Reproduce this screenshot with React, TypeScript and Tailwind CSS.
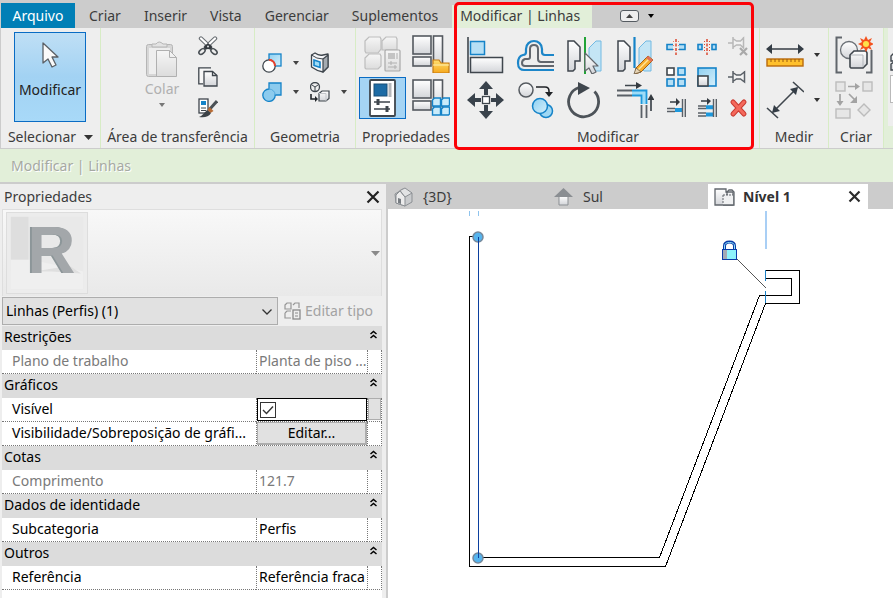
import { Fragment } from "react";
import type { ReactNode } from "react";
import clsx from "clsx";

const INK = "#3f464d";
const BLUE = "#1583c8";
const SKY = "#b5dff5";

function Svg({
  w,
  h,
  children,
  className,
}: {
  w: number;
  h: number;
  children: ReactNode;
  className?: string;
}) {
  return (
    <svg
      width={w}
      height={h}
      viewBox={`0 0 ${w} ${h}`}
      fill="none"
      aria-hidden="true"
      className={clsx("block shrink-0", className)}
    >
      {children}
    </svg>
  );
}

// Gradients shared by all the ribbon icons.
function SharedDefs() {
  return (
    <svg width="0" height="0" className="absolute" aria-hidden="true">
      <defs>
        <linearGradient id="metal" x1="0" y1="0" x2="0" y2="1">
          <stop offset="0" stopColor="#ffffff" />
          <stop offset="1" stopColor="#d3d5d9" />
        </linearGradient>
        <linearGradient id="pale" x1="0" y1="0" x2="0" y2="1">
          <stop offset="0" stopColor="#f6f6f6" />
          <stop offset="1" stopColor="#dcdcdc" />
        </linearGradient>
        <linearGradient id="sky" x1="0" y1="0" x2="1" y2="1">
          <stop offset="0" stopColor="#8ed0f1" />
          <stop offset="1" stopColor="#d5effb" />
        </linearGradient>
        <linearGradient id="gold" x1="0" y1="0" x2="0" y2="1">
          <stop offset="0" stopColor="#ffdf70" />
          <stop offset="1" stopColor="#f5a81c" />
        </linearGradient>
      </defs>
    </svg>
  );
}

function Caret({ className }: { className?: string }) {
  return (
    <Svg w={6} h={4} className={className}>
      <path d="M0 0h6L3 4z" fill="currentColor" />
    </Svg>
  );
}

function Pointer() {
  return (
    <Svg w={20} h={28}>
      <path
        d="M3 2v20l5-4 4 8 4-2-4-8h6z"
        fill="#fafafa"
        stroke="#5b6066"
        strokeWidth="1.300"
        strokeLinejoin="round"
      />
    </Svg>
  );
}

function Paste() {
  return (
    <Svg w={34} h={39}>
      <rect x="1.500" y="4.500" width="26" height="32" rx="2" fill="#d6d6d6" stroke="#b5b5b5" />
      <rect x="4" y="8" width="21" height="26" fill="#eeeeee" />
      <path d="M7 7V4h4q3-4 7 0h4v3z" fill="#e3e3e3" stroke="#b5b5b5" />
      <path d="M11.500 10.500h13l7 7v19h-20z" fill="url(#pale)" stroke="#b0b0b0" />
      <path d="M24.500 10.500v7h7" stroke="#b0b0b0" />
    </Svg>
  );
}

// Blades on top, pivot in the middle, handles splayed below.
function Cut() {
  return (
    <Svg w={20} h={20}>
      <path d="M3 2.500l9 8.500M17 2.500L8 11" stroke="#6c7176" strokeWidth="4.400" strokeLinecap="round" />
      <path d="M3 2.500l9 8.500M17 2.500L8 11" stroke="#fff" strokeWidth="2.200" strokeLinecap="round" />
      <path d="M6.500 10l3.500-3 3.500 3 1 4-4.500-1-4.500 1z" fill="#34393e" />
      <ellipse cx="4" cy="15.500" rx="3.500" ry="2.200" transform="rotate(-40 4 15.500)" fill="#eee" stroke="#4b5156" strokeWidth="1.600" />
      <ellipse cx="16" cy="15.500" rx="3.500" ry="2.200" transform="rotate(40 16 15.500)" fill="#eee" stroke="#4b5156" strokeWidth="1.600" />
      <circle cx="10" cy="10.500" r="1" fill="#dfe1e3" />
    </Svg>
  );
}

function CopyPages() {
  return (
    <Svg w={20} h={20}>
      <path d="M13 .8H.8v16H5" stroke={INK} strokeWidth="1.300" fill="#f7f7f7" />
      <path d="M6 4.500h8.500l4.500 4V19H6z" fill="url(#metal)" stroke={INK} strokeWidth="1.300" />
      <path d="M14.500 4.500v4H19" stroke={INK} strokeWidth="1.300" />
    </Svg>
  );
}

function MatchType() {
  return (
    <Svg w={20} h={20}>
      <rect x="1" y="1" width="9" height="14" fill="#fff" stroke={INK} strokeWidth="1.300" />
      <rect x="3" y="3" width="5" height="4" fill={BLUE} />
      <path d="M3 10h5M3 12.500h5" stroke={INK} />
      <path d="M19 3l-8 9" stroke="#4b5156" strokeWidth="3" />
      <path d="M11.500 9l4 4-3 2-3-3z" fill="#b86c35" />
      <path d="M9 12l4 3c-2 4-7 5-12 4 3-1 5-4 8-7z" fill="#3c4247" />
    </Svg>
  );
}

function Cope() {
  return (
    <Svg w={20} h={20}>
      <rect x="7" y="1" width="12" height="12" fill="url(#sky)" stroke={BLUE} strokeWidth="1.300" />
      <circle cx="7" cy="13" r="6.200" fill="#fff" stroke={INK} strokeWidth="1.300" />
      <path d="M7 6.800A6 6 0 0 1 13 13" stroke="#e8402c" strokeWidth="2" />
    </Svg>
  );
}

function Join() {
  return (
    <Svg w={20} h={20}>
      <path
        d="M7 1h12v12h-5.800A6.200 6.200 0 1 1 7 7z"
        fill="#8ccbee"
        stroke={BLUE}
        strokeWidth="1.300"
      />
      <path d="M7 7a6.200 6.200 0 0 1 6.200 6" stroke="#55a9dc" />
    </Svg>
  );
}

function WallOpening() {
  return (
    <Svg w={20} h={22}>
      <path d="M1.500 3L5 1q4 3 8 2l5-1v13l-5 5q-6-1-11.500-5z" fill="#f5f6f8" stroke={INK} strokeWidth="1.300" strokeLinejoin="round" />
      <path d="M13 7l5-4v12l-5 5z" fill="#a5abb1" stroke={INK} strokeWidth="1.200" strokeLinejoin="round" />
      <path d="M1.500 3q5 4 11.500 4" stroke={INK} />
      <path d="M4 8l6 2v5.500l-6-2z" fill="#9fdcf7" stroke={BLUE} strokeWidth="1.600" />
    </Svg>
  );
}

function Demolish() {
  return (
    <Svg w={20} h={20}>
      <circle cx="5" cy="5" r="4.500" stroke={INK} strokeWidth="1.300" />
      <path d="M5 5L2 3M5 5l3-2M5 5v4" stroke={INK} />
      <path d="M1 12v5h5" stroke="#22262a" strokeWidth="1.600" />
      <path d="M5 14l3 3-3 3z" fill="#22262a" />
      <path d="M9 11.500l3-2.500h7v7.500l-3 2.500H9z" fill="url(#metal)" stroke={INK} strokeWidth="1.200" />
      <path d="M9 11.500h7V19" stroke="#c4c7cb" />
    </Svg>
  );
}

function TypeProperties() {
  return (
    <Svg w={38} h={38}>
      <g fill="url(#pale)" stroke="#bdbdbd" strokeWidth="1.200">
        <path d="M1 6l4-4h11l1 2v10l-3 4H2l-1-2z" />
        <path d="M18 6l4-4h10l1 2v11H18z" />
        <path d="M1 23l4-4h11l1 2v10l-3 3H2l-1-1z" />
        <rect x="21" y="15" width="15" height="21" rx="1" stroke="#a9a9a9" />
      </g>
      <rect x="24" y="18" width="7" height="6" fill="#c4c4c4" />
      <path d="M33 18v6M24 28h9M24 32h9M27 26v4M31 30v4" stroke="#b0b0b0" />
    </Svg>
  );
}

function PanelFrame({ children }: { children: ReactNode }) {
  return (
    <Svg w={38} h={38}>
      <g fill="url(#metal)" stroke="#54595f" strokeWidth="1.600">
        <rect x="1" y="1" width="18" height="18" />
        <rect x="21.500" y="1" width="9" height="29" />
        <rect x="1" y="22" width="18" height="9" />
      </g>
      {children}
    </Svg>
  );
}

function FamilyFolder() {
  return (
    <PanelFrame>
      <path d="M21 25h6l2 3h8v10H21z" fill="url(#gold)" stroke="#c77a10" strokeWidth="1.200" />
      <path d="M21 30h16" stroke="#fff0b0" />
    </PanelFrame>
  );
}

function FamilyTypes() {
  return (
    <PanelFrame>
      <g fill="#c9ebfa" stroke={BLUE} strokeWidth="1.400">
        <path d="M20.500 21l2-2h6v8h-8zM29.500 21l2-2h6v7l-1 1h-7z" />
        <path d="M20.500 30l2-2h6v8h-8zM29.500 30l2-2h6v7l-1 1h-7z" />
      </g>
    </PanelFrame>
  );
}

function PropertiesSheet() {
  return (
    <Svg w={28} h={38}>
      <rect x="1" y="1" width="25" height="36" rx="1" fill="#fff" stroke={INK} strokeWidth="1.800" />
      <rect x="5" y="5" width="13" height="12" fill="#1c6ba5" stroke="#184e77" />
      <path d="M21 4v14" stroke="#b4b7bb" strokeWidth="3" />
      <path d="M5 23h16M5 30h16" stroke={INK} strokeWidth="1.400" />
      <path d="M9 20v6M18 27v6" stroke={INK} strokeWidth="3" />
    </Svg>
  );
}

function Align() {
  return (
    <Svg w={38} h={38}>
      <path d="M2 1v36" stroke={INK} strokeWidth="1.600" />
      <rect x="4.500" y="5.500" width="14" height="13" fill={SKY} stroke={BLUE} strokeWidth="1.500" />
      <rect x="4.500" y="21.500" width="32" height="15" fill="url(#metal)" stroke={INK} strokeWidth="1.500" />
    </Svg>
  );
}

function Offset() {
  return (
    <Svg w={38} h={38}>
      <path
        d="M38 19h-9q-3 0-3-3v-3c0-5-4-8-8-8s-8 3-8 8v3q0 3-3 3c-4 1-5 4-5 8 0 5 3 7 6 7h30"
        stroke="#1c86c9"
        strokeWidth="2.200"
      />
      <path
        d="M38 26H25q-3 0-3-3V13q0-4-4-4t-4 4v8q0 2-2 2H9q-3 1-3 4t3 3h29"
        stroke="#62676e"
        strokeWidth="2"
      />
    </Svg>
  );
}

function MirrorHalf() {
  return <path d="M2 5h6l6 6v14H9v8l-2 2H2z" fill="url(#metal)" stroke={INK} strokeWidth="1.500" />;
}

function MirrorPick() {
  return (
    <Svg w={38} h={38}>
      <MirrorHalf />
      <path d="M35 5h-5l-7 7v14l5 9h7z" fill="#c4e5f5" stroke="#72b9e2" />
      <path d="M19 1v37" stroke="#20a336" strokeWidth="2" />
      <path
        d="M19 17v18l4-3 3 6 4-2-3-6h5z"
        fill="url(#metal)"
        stroke="#63676c"
        strokeWidth="1.200"
        strokeLinejoin="round"
      />
    </Svg>
  );
}

function MirrorDraw() {
  return (
    <Svg w={38} h={38}>
      <MirrorHalf />
      <path d="M35 5h-5l-7 7v18l5 5h7z" fill="#c4e5f5" stroke="#72b9e2" />
      <path d="M18.500 1v31" stroke={BLUE} strokeWidth="2.200" />
      <path d="M20 32L32 20l5 4-12 12-6 2z" fill="#f6ad2d" stroke="#a25f18" />
      <path d="M22 34l12-12" stroke="#ffe59a" strokeWidth="1.500" />
      <path d="M30 22l2-2 5 4-2 2z" fill="#e0705a" />
      <path d="M20 32l5 4-7 2z" fill="#e8d5b5" stroke="#6a5a45" strokeWidth=".8" />
    </Svg>
  );
}

function Move() {
  return (
    <Svg w={38} h={38}>
      <g fill="#39424b">
        <path d="M20 0l7 8h-5v6h-4V8h-5z" />
        <path d="M20 38l7-8h-5v-6h-4v6h-5z" />
        <path d="M1 19l8-7v5h6v4H9v5z" />
        <path d="M38 19l-8-7v5h-5v4h5v5z" />
      </g>
      <rect x="16.500" y="15.500" width="7" height="7" fill="#fff" stroke={INK} strokeWidth="1.300" />
    </Svg>
  );
}

function CopyObjects() {
  return (
    <Svg w={38} h={38}>
      <circle cx="10" cy="9" r="7" fill="url(#metal)" stroke="#565b61" strokeWidth="1.500" />
      <path d="M20 6h9q4 0 4 4v3" stroke="#202327" strokeWidth="1.600" />
      <path d="M29 11l4 5 4-5z" fill="#202327" />
      <circle cx="30" cy="30" r="6.500" fill="#9fd8f4" stroke={BLUE} strokeWidth="1.500" />
      <circle cx="24" cy="25" r="7.500" fill="url(#sky)" stroke={BLUE} strokeWidth="1.500" />
    </Svg>
  );
}

function Rotate() {
  return (
    <Svg w={38} h={38}>
      <path d="M28.500 10.500a15 15 0 1 1-15.500-4" stroke="#4d5359" strokeWidth="2.800" />
      <path d="M12 1l12 6-12 7z" fill="#3f464d" />
    </Svg>
  );
}

function TrimCorner() {
  return (
    <Svg w={38} h={38}>
      <path d="M9 4.500h12M35 30V18" stroke={INK} strokeWidth="1.700" />
      <path d="M20 1l6 3.500L20 8zM31.500 19l3.500-6 3.500 6z" fill="#343a40" />
      <path d="M1 9.500h15M1 14.500h15M25.500 24v13M30.500 24v13" stroke="#5a6067" strokeWidth="1.800" />
      <path d="M16 12h12v11" stroke="#9fdcf7" strokeWidth="4" />
      <path d="M16 9.500h14.500V23M16 14.500h9.500V23" stroke="#1d98dc" strokeWidth="1.800" />
    </Svg>
  );
}

function Split() {
  return (
    <Svg w={20} h={20}>
      <path d="M7 8.500H1v5h6M13 8.500h6v5h-6" fill={SKY} stroke={BLUE} strokeWidth="1.600" />
      <path d="M10 3v16" stroke="#dc4a32" strokeWidth="1.500" strokeDasharray="3 1.500" />
      <path d="M7.500 5v12M12.500 5v12" stroke="#e8806c" strokeDasharray="1 3" />
    </Svg>
  );
}

function SplitGap() {
  return (
    <Svg w={20} h={20}>
      <rect x="1" y="8.500" width="4" height="5" fill={SKY} stroke={BLUE} strokeWidth="1.600" />
      <rect x="15" y="8.500" width="4" height="5" fill={SKY} stroke={BLUE} strokeWidth="1.600" />
      <path d="M10 3v16" stroke="#dc4a32" strokeWidth="1.500" strokeDasharray="3 1.500" />
      <path d="M7.500 5v12M12.500 5v12" stroke="#dc4a32" strokeDasharray="1 2" />
    </Svg>
  );
}

function PinShape({ color }: { color: string }) {
  return (
    <path
      d="M0 10h5M5 4v12M5.500 6l3 2h4l4-3v10l-4-3h-4l-3 2M16.500 4v12"
      fill="#f2f2f2"
      stroke={color}
      strokeWidth="1.500"
    />
  );
}

function Unpin() {
  return (
    <Svg w={20} h={20}>
      <path
        d="M0 7h5M5 1v12M5.500 3l3 2h4l3-3v10l-3-3h-4l-3 2M15.500 1v12"
        fill="#f2f2f2"
        stroke="#b8b8b8"
        strokeWidth="1.500"
      />
      <path d="M12 12l7 7M19 12l-7 7" stroke="#a9a9a9" strokeWidth="2.200" />
    </Svg>
  );
}

function Pin() {
  return (
    <Svg w={20} h={20}>
      <PinShape color="#5a6067" />
    </Svg>
  );
}

function ArrayIcon() {
  return (
    <Svg w={20} h={20}>
      <rect x="1" y="1" width="7" height="7" fill="#fff" stroke={INK} strokeWidth="1.600" />
      <g fill={SKY} stroke={BLUE} strokeWidth="1.600">
        <rect x="12" y="1" width="7" height="7" />
        <rect x="1" y="12" width="7" height="7" />
        <rect x="12" y="12" width="7" height="7" />
      </g>
    </Svg>
  );
}

function Scale() {
  return (
    <Svg w={20} h={20}>
      <rect x="1" y="1" width="18" height="18" fill="url(#sky)" stroke={BLUE} strokeWidth="1.600" />
      <rect x="1" y="9" width="10" height="10" fill="url(#metal)" stroke={INK} strokeWidth="1.600" />
    </Svg>
  );
}

function TrimOne() {
  return (
    <Svg w={20} h={20}>
      <path d="M4 4h7" stroke={INK} strokeWidth="1.600" />
      <path d="M10 0l4 4-4 4z" fill="#343a40" />
      <path d="M1 10.500h8M1 13.500h8" stroke="#5a6067" strokeWidth="1.400" />
      <path d="M9 12h7" stroke="#1d98dc" strokeWidth="4" />
      <path d="M16.500 1v18M19.300 1v18" stroke="#5a6067" strokeWidth="1.400" />
    </Svg>
  );
}

function TrimMany() {
  return (
    <Svg w={20} h={20}>
      <path d="M4 3h7" stroke={INK} strokeWidth="1.600" />
      <path d="M10 0l4 3-4 4z" fill="#343a40" />
      <path d="M1 8h8M1 10.500h8M1 15h8M1 18h8" stroke="#5a6067" strokeWidth="1.400" />
      <path d="M9 9.200h7M9 16.500h7" stroke="#1d98dc" strokeWidth="4" />
      <path d="M16.500 1v18M19.300 1v18" stroke="#5a6067" strokeWidth="1.400" />
    </Svg>
  );
}

function Delete() {
  return (
    <Svg w={20} h={20}>
      <path d="M5 4l11 12M16 4L5 16" stroke="#c93a30" strokeWidth="5" strokeLinecap="round" />
      <path d="M5 4l11 12M16 4L5 16" stroke="#f4695c" strokeWidth="3" strokeLinecap="round" />
    </Svg>
  );
}

function Ruler() {
  return (
    <Svg w={38} h={38}>
      <path d="M4 13h30" stroke={INK} strokeWidth="1.600" />
      <path d="M0 13l6-5v10zM38 13l-6-5v10z" fill="#343d46" />
      <rect x="1" y="23" width="36" height="7" fill="#ffc02c" stroke="#b96a0c" strokeWidth="1.400" />
      <path d="M5 23v3M9 23v3M13 23v3M17 23v3M21 23v3M25 23v3M29 23v3M33 23v3" stroke="#9a5a0e" />
    </Svg>
  );
}

function AlignedDimension() {
  return (
    <Svg w={38} h={38}>
      <path d="M7 31L31 7" stroke={INK} strokeWidth="1.600" />
      <path d="M1 27l11 10M27 1l11 10" stroke={INK} strokeWidth="1.600" />
      <path d="M6 32l2-8 6 6zM32 6l-8 2 6 6z" fill="#343d46" />
    </Svg>
  );
}

function CreateGroup() {
  return (
    <Svg w={38} h={38}>
      <path d="M7 1.500H1.500v35H7M31 36.500h5.500V14" stroke="#61666c" strokeWidth="2" />
      <circle cx="14" cy="14" r="8.500" fill="url(#metal)" stroke="#6b7076" strokeWidth="1.300" />
      <path d="M15 19l4-4h12l1 2v11l-4 4H16l-1-1z" fill="url(#metal)" stroke={INK} strokeWidth="1.600" />
      <path d="M16 19h12v12" stroke="#b3b7bc" />
      <path
        d="M31 0l2 4 4-2-2 4 4 2-4 2 2 4-4-2-2 4-2-4-4 2 2-4-4-2 4-2-2-4 4 2z"
        fill="#f4521e"
      />
      <circle cx="31" cy="8" r="3" fill="#ffe04a" />
    </Svg>
  );
}

function CreateSimilar() {
  return (
    <Svg w={38} h={38}>
      <g fill="#e6e6e6" stroke="#bcbcbc" strokeWidth="1.400">
        <rect x="1" y="1" width="9" height="9" />
        <rect x="28" y="1" width="9" height="9" />
        <rect x="1" y="28" width="14" height="9" />
        <path d="M29 23l6 6-6 6-6-6z" />
      </g>
      <path d="M13 5.500h8M5 13v8M14 13l6 6" stroke="#a3a3a3" strokeWidth="1.700" />
      <path d="M20 2l5 3.500L20 9zM1.500 20h7L5 25zM22 15v7h-7z" fill="#a3a3a3" />
    </Svg>
  );
}

function ToolButton({
  label,
  children,
  className,
}: {
  label: string;
  children: ReactNode;
  className?: string;
}) {
  return (
    <button
      type="button"
      aria-label={label}
      className={clsx("flex shrink-0 items-center justify-center", className)}
    >
      {children}
    </button>
  );
}

function RibbonPanel({
  title,
  children,
  className,
  caret,
}: {
  title: string;
  children: ReactNode;
  className: string;
  caret?: boolean;
}) {
  return (
    <section
      className={clsx(
        "relative flex shrink-0 flex-col border-r border-[#d7ecc5] bg-[#eeeeee]",
        className
      )}
    >
      <div className="flex h-[98px] items-center">{children}</div>
      <h2 className="flex h-[22px] items-center justify-center gap-2 whitespace-nowrap">
        {title}
        {caret && (
          <Svg w={9} h={5}>
            <path d="M0 0h9L4.500 5z" fill="#333" />
          </Svg>
        )}
      </h2>
    </section>
  );
}

const TABS = ["Criar", "Inserir", "Vista", "Gerenciar", "Suplementos"];

function TabBar() {
  return (
    <nav className="flex h-7 items-end bg-[#cccccc] pl-px">
      <button type="button" className="h-[25px] w-[74px] bg-[#007fb6] text-white">
        Arquivo
      </button>
      <div className="flex h-[25px] items-center gap-[23px] pr-3.5 pl-3.5">
        {TABS.map((tab) => (
          <button type="button" key={tab}>
            {tab}
          </button>
        ))}
      </div>
      <button
        type="button"
        className="h-[23px] w-[140px] bg-[#e2efd9] pr-1 pb-0.5 whitespace-nowrap"
      >
        Modificar | Linhas
      </button>
      <div className="flex h-[25px] items-center gap-1.5 pl-7 text-black">
        <button
          type="button"
          aria-label="Minimizar"
          className="flex h-3 w-[19px] items-center justify-center rounded-[3px] border border-[#555b61] bg-[#eeeeee]"
        >
          <Svg w={7} h={4}>
            <path d="M0 4h7L3.500 0z" fill="#444" />
          </Svg>
        </button>
        <ToolButton label="Opções da faixa" className="size-3">
          <Caret />
        </ToolButton>
      </div>
    </nav>
  );
}

function Ribbon() {
  return (
    <div className="flex h-[120px] overflow-x-clip bg-[#e2efd9]">
      <RibbonPanel title="Selecionar" caret className="w-[101px] border-l border-l-[#cccccc]">
        <button
          type="button"
          className="ml-[13px] flex h-[90px] w-[72px] flex-col items-center justify-start gap-[11px] border border-[#0a6cc4] bg-linear-to-b from-[#bfdff5] via-[#a2d2f3] to-[#a8d9f8] pt-2 text-[#222]"
        >
          <Pointer />
          Modificar
        </button>
      </RibbonPanel>

      <RibbonPanel title="Área de transferência" className="w-[154px]">
        <button
          type="button"
          className="ml-[41px] flex w-10 flex-col items-center text-[#b0b0b0]"
        >
          <Paste />
          <span className="leading-5">Colar</span>
          <Caret className="mt-1 mb-2 text-[#777]" />
        </button>
        <div className="ml-4 flex flex-col gap-[11px]">
          <ToolButton label="Cortar"><Cut /></ToolButton>
          <ToolButton label="Copiar"><CopyPages /></ToolButton>
          <ToolButton label="Corresponder tipo"><MatchType /></ToolButton>
        </div>
      </RibbonPanel>

      <RibbonPanel title="Geometria" className="w-[101px]">
        <div className="ml-[7px] grid grid-cols-[20px_6px_20px_6px] items-center gap-x-[11px] gap-y-2 text-[#444]">
          <ToolButton label="Recorte"><Cope /></ToolButton>
          <Caret />
          <ToolButton label="Abertura"><WallOpening /></ToolButton>
          <span />
          <ToolButton label="Unir"><Join /></ToolButton>
          <Caret />
          <ToolButton label="Demolir"><Demolish /></ToolButton>
          <Caret />
        </div>
      </RibbonPanel>

      <RibbonPanel title="Propriedades" className="w-[101px]">
        <div className="ml-[3px] grid grid-cols-[47px_38px] items-center justify-items-center gap-x-1.5 gap-y-1">
          <ToolButton label="Propriedades de tipo"><TypeProperties /></ToolButton>
          <ToolButton label="Categoria de família"><FamilyFolder /></ToolButton>
          <ToolButton
            label="Propriedades"
            className="h-[42px] w-[47px] border border-[#0a6cc4] bg-[#a5d4f4]"
          >
            <PropertiesSheet />
          </ToolButton>
          <ToolButton label="Tipos de família"><FamilyTypes /></ToolButton>
        </div>
      </RibbonPanel>

      <RibbonPanel title="Modificar" className="w-[303px]">
        <div className="flex items-center gap-3 pl-[9px]">
          <div className="grid grid-cols-4 gap-x-3 gap-y-[7px]">
            <ToolButton label="Alinhar"><Align /></ToolButton>
            <ToolButton label="Deslocamento"><Offset /></ToolButton>
            <ToolButton label="Espelhar por eixo"><MirrorPick /></ToolButton>
            <ToolButton label="Espelhar desenhando"><MirrorDraw /></ToolButton>
            <ToolButton label="Mover"><Move /></ToolButton>
            <ToolButton label="Copiar elementos"><CopyObjects /></ToolButton>
            <ToolButton label="Rotacionar"><Rotate /></ToolButton>
            <ToolButton label="Aparar canto"><TrimCorner /></ToolButton>
          </div>
          <div className="grid grid-cols-3 gap-[11px]">
            <ToolButton label="Dividir"><Split /></ToolButton>
            <ToolButton label="Dividir com folga"><SplitGap /></ToolButton>
            <ToolButton label="Desafixar"><Unpin /></ToolButton>
            <ToolButton label="Matriz"><ArrayIcon /></ToolButton>
            <ToolButton label="Escala"><Scale /></ToolButton>
            <ToolButton label="Fixar"><Pin /></ToolButton>
            <ToolButton label="Aparar um"><TrimOne /></ToolButton>
            <ToolButton label="Aparar vários"><TrimMany /></ToolButton>
            <ToolButton label="Excluir"><Delete /></ToolButton>
          </div>
        </div>
        {/* highlight frame around the contextual tab and its panel */}
        <div className="pointer-events-none absolute -top-[26px] -bottom-0.5 -left-[3px] w-[300px] rounded-[5px] border-3 border-[#fb0207]" />
      </RibbonPanel>

      <RibbonPanel title="Medir" className="w-[69px]">
        <div className="ml-1.5 grid grid-cols-[38px_6px] items-center gap-x-2.5 gap-y-[7px] text-[#333]">
          <ToolButton label="Medir distância"><Ruler /></ToolButton>
          <Caret />
          <ToolButton label="Cota alinhada"><AlignedDimension /></ToolButton>
          <Caret />
        </div>
      </RibbonPanel>

      <RibbonPanel title="Criar" className="w-[55px]">
        <div className="ml-1.5 flex flex-col gap-[7px]">
          <ToolButton label="Criar grupo"><CreateGroup /></ToolButton>
          <ToolButton label="Criar similar"><CreateSimilar /></ToolButton>
        </div>
      </RibbonPanel>

      <section className="ml-1 min-w-0 flex-1 overflow-hidden">
        <div className="flex h-[98px] flex-col justify-center gap-1 bg-[#eeeeee] pl-0.5">
          <Svg w={20} h={20}>
            <path d="M1 5l3-3h7v8H1zM1 13l3-2h7v8H1z" fill="url(#metal)" stroke={INK} strokeWidth="1.400" />
          </Svg>
          <span className="h-7 w-40 border border-[#b9b9b9] bg-white" />
        </div>
      </section>
    </div>
  );
}

type Row = { name: string; value: string; kind?: "check" | "button"; muted?: boolean };

const GROUPS: { title: string; rows: Row[] }[] = [
  {
    title: "Restrições",
    rows: [{ name: "Plano de trabalho", value: "Planta de piso ...", muted: true }],
  },
  {
    title: "Gráficos",
    rows: [
      { name: "Visível", value: "", kind: "check" },
      { name: "Visibilidade/Sobreposição de gráfi...", value: "Editar...", kind: "button" },
    ],
  },
  { title: "Cotas", rows: [{ name: "Comprimento", value: "121.7", muted: true }] },
  { title: "Dados de identidade", rows: [{ name: "Subcategoria", value: "Perfis" }] },
  { title: "Outros", rows: [{ name: "Referência", value: "Referência fraca" }] },
];

function ValueCell({ row }: { row: Row }) {
  if (row.kind === "check") {
    return (
      <div className="flex h-[23px] items-center border border-black pl-0.5">
        <span className="relative flex size-4">
          <input
            type="checkbox"
            defaultChecked
            aria-label={row.name}
            className="peer size-4 appearance-none border border-[#333] bg-white"
          />
          <Svg w={16} h={16} className="pointer-events-none absolute inset-0 hidden peer-checked:block">
            <path d="M3 8l3.500 3.500L13 4.500" stroke="#333" strokeWidth="1.400" />
          </Svg>
        </span>
      </div>
    );
  }
  if (row.kind === "button") {
    return (
      <button
        type="button"
        className="block h-[23px] w-full border border-r-2 border-b-2 border-[#adadad] bg-[#e1e1e1] leading-5"
      >
        {row.value}
      </button>
    );
  }
  return <span className="block pl-0.5">{row.value}</span>;
}

function PropertyTable() {
  return (
    <table className="w-full table-fixed border-separate border-spacing-0 bg-white text-black">
      <colgroup>
        <col />
        <col className="w-[111px]" />
        <col className="w-[15px]" />
      </colgroup>
      <tbody>
        {GROUPS.map((group) => (
          <Fragment key={group.title}>
            <tr className="h-6 bg-[#dcdcdc]">
              <th colSpan={2} className="p-0 pl-0.5 text-left align-top leading-[22px] font-normal">
                {group.title}
              </th>
              <td className="p-0 align-top">
                <ToolButton label={`Recolher ${group.title}`} className="w-3 pt-1">
                  <Svg w={7} h={9}>
                    <path d="M.5 4l3-2.500 3 2.500M.5 8l3-2.500 3 2.500" stroke="#000" strokeWidth="1.500" />
                  </Svg>
                </ToolButton>
              </td>
            </tr>
            {group.rows.map((row) => (
              <tr
                key={row.name}
                className={clsx(
                  "h-6 *:border-b *:border-dotted *:border-[#777] *:p-0 *:align-top *:leading-[21px]",
                  row.muted && "text-[#7a7a7a]"
                )}
              >
                <th className="overflow-hidden text-left font-normal whitespace-nowrap">
                  <span className="pl-2.5">{row.name}</span>
                </th>
                <td className="overflow-hidden border-l whitespace-nowrap">
                  <ValueCell row={row} />
                </td>
                <td className="border-x">
                  {row.kind === "check" && (
                    <button
                      type="button"
                      aria-label="Associar parâmetro"
                      className="block h-[22px] w-full border border-[#adadad] bg-[#e1e1e1]"
                    />
                  )}
                </td>
              </tr>
            ))}
          </Fragment>
        ))}
      </tbody>
    </table>
  );
}

function PropertiesPanel() {
  return (
    <aside className="flex w-[388px] shrink-0 flex-col border-r-2 border-[#cccccc] bg-[#eeeeee] pr-1 pl-0.5">
      <header className="flex h-[25px] items-center justify-between pl-0.5">
        <h2>Propriedades</h2>
        <ToolButton label="Fechar propriedades" className="size-[18px]">
          <Svg w={14} h={14}>
            <path d="M1.500 1.500l11 11M12.500 1.500l-11 11" stroke="#222" strokeWidth="2.200" />
          </Svg>
        </ToolButton>
      </header>

      <div className="flex h-[87px] items-center justify-between border border-b-0 border-[#dedede] bg-linear-to-b from-[#f8f8f8] to-[#e9e9e9] pl-[3px]">
        <svg
          viewBox="0 0 82 82"
          className="size-[82px] border border-[#dddddd] bg-[#ececec]"
          role="img"
          aria-label="Revit"
        >
          <rect x="4" y="4" width="74" height="74" fill="#e9e9e9" />
          <path d="M4 4h18v44H4z" fill="#dedede" />
          <path d="M4 48h22l52 12v18H4z" fill="#efefef" />
          <path d="M28 60l36-6 12 8-30-2z" fill="#dfdfdf" />
          <text
            x="21"
            y="62"
            fontSize="68"
            fontWeight="700"
            fill="#a3a7aa"
            className="font-['Liberation_Sans',sans-serif] [text-shadow:-1px_0_#8c9699,-2px_0_#8c9699]"
          >
            R
          </text>
        </svg>
        <ToolButton label="Seletor de tipo" className="h-full w-3 text-[#8a8a8a]">
          <Svg w={9} h={5}>
            <path d="M0 0h9L4.500 5z" fill="currentColor" />
          </Svg>
        </ToolButton>
      </div>

      <div className="flex h-[30px] items-center gap-1.5 pb-px">
        <div className="relative w-[276px]">
          <select
            aria-label="Filtro de propriedades"
            className="block h-7 w-full appearance-none border border-[#adadad] bg-[#e1e1e1] pl-[3px] text-black"
          >
            <option>Linhas (Perfis) (1)</option>
          </select>
          <Svg w={10} h={6} className="pointer-events-none absolute top-3 right-1.5">
            <path d="M.5.5L5 5 9.500.5" stroke="#333" strokeWidth="1.300" />
          </Svg>
        </div>
        <button type="button" className="flex items-center gap-1 whitespace-nowrap text-[#a3a3a3]">
          <Svg w={17} h={18}>
            <path
              d="M1 3l2-2h4v6H1zM9 3l2-2h4v5M1 11l2-2h4M1 11v5h6"
              stroke="#969696"
              strokeWidth="1.200"
            />
            <rect x="9" y="8" width="7" height="9" fill="#eee" stroke="#8a8a8a" strokeWidth="1.300" />
            <path d="M11 11h3M11 14h3" stroke="#8a8a8a" />
          </Svg>
          Editar tipo
        </button>
      </div>

      <div className="flex-1 bg-white">
        <PropertyTable />
      </div>
    </aside>
  );
}

function ViewTabs() {
  return (
    <div className="flex h-[25px] bg-[#cccccc]">
      <button type="button" className="flex w-40 items-center gap-2.5 pl-1.5">
        <Svg w={19} h={20}>
          <path d="M1 7l8-5 9 4v9l-7 4-9-3z" fill="#c9cbcd" stroke="#8b8f93" strokeLinejoin="round" />
          <path d="M2 8l4-4 5 6v9l-9-3z" fill="#ececec" stroke="#8b8f93" strokeLinejoin="round" />
          <path d="M6 3.500L11 1l7 5-7 4z" fill="#e2e3e4" stroke="#8b8f93" strokeLinejoin="round" />
          <path d="M4 11l3 1v5l-3-1z" fill="#777c81" />
        </Svg>
        {"{3D}"}
      </button>
      <button type="button" className="flex w-40 items-center gap-2.5 pl-1.5">
        <Svg w={19} h={18}>
          <path d="M5 8h9v9H5z" fill="url(#metal)" stroke="#8b8f93" />
          <path d="M9.500 0L19 9H0z" fill="#8a8e92" />
        </Svg>
        Sul
      </button>
      <div className="flex w-40 items-center justify-between bg-white pr-1.5 pl-1.5 font-bold text-[#333]">
        <button type="button" className="flex items-center gap-2">
          <Svg w={21} h={18}>
            <path d="M1 1h11v3h7v13H1z" fill="url(#metal)" stroke="#62676d" strokeWidth="1.300" />
            <path d="M9 7h10v10H9z" fill="#f0f1f2" />
            <path d="M13 7V4l2-2h3l2 2v13H9" stroke="#62676d" strokeWidth="1.300" />
            <path d="M9 7h10M9 7v9M13 3v4" stroke="#62676d" strokeDasharray="2 1" />
          </Svg>
          Nível 1
        </button>
        <ToolButton label="Fechar vista" className="size-4">
          <Svg w={13} h={13}>
            <path d="M1.500 1.500l10 10M11.500 1.500l-10 10" stroke="#2b2b2b" strokeWidth="2.200" />
          </Svg>
        </ToolButton>
      </div>
    </div>
  );
}

function Drawing() {
  return (
    <svg width="505" height="380" viewBox="0 0 505 380" fill="none" className="block" aria-hidden="true">
      <g shapeRendering="crispEdges">
        <path d="M81.500 2v5M90.500 2v5" stroke="#8fc4ee" />
        <path d="M378 2v38" stroke="#a9cff5" strokeWidth="2" />
        <path d="M90 27.500h-8.500v330h196l100-263h34v-33h-34" stroke="#000" />
        <path d="M90 348.500h181.500l100-262h32v-17h-26" stroke="#000" />
        <path d="M377.500 61v11M377.500 82v12" stroke="#1a7fc4" />
      </g>
      <path d="M349 50l29 29" stroke="#555" />
      <g stroke="#76889a" strokeWidth="1.500" fill="#55b4ee">
        <circle cx="90" cy="28" r="5" />
        <circle cx="90" cy="349" r="5" />
      </g>
      <path d="M90.500 28v321" stroke="#0b3f9e" shapeRendering="crispEdges" />
      <path d="M336.500 40v-3q0-4 5-4t5 4v3" stroke="#0a3ba8" strokeWidth="3" />
      <path d="M336.500 40v-3q0-3.500 5-3.500t5 3.500v3" stroke="#8fe3fb" />
      <rect x="334.500" y="40.500" width="14" height="10" fill="#8df2fb" stroke="#0a3ba8" />
      <path d="M335 41h4v9h-4z" fill="#a3a9b5" />
    </svg>
  );
}

export default function App() {
  return (
    <div className="flex min-h-screen flex-col bg-[#eeeeee] font-['Noto_Sans','Open_Sans',sans-serif] text-[14px] leading-5 text-[#3c3c3c]">
      <SharedDefs />
      <TabBar />
      <Ribbon />
      <div className="flex h-9 items-center border-t border-b-2 border-[#cccccc] bg-[#e2efd9] pt-px pl-[11px] text-[#a6a9a3] [text-shadow:1px_1px_#fff]">
        Modificar | Linhas
      </div>
      <div className="flex flex-1">
        <PropertiesPanel />
        <main className="flex min-w-0 flex-1 flex-col overflow-hidden bg-white">
          <ViewTabs />
          <Drawing />
        </main>
      </div>
    </div>
  );
}
